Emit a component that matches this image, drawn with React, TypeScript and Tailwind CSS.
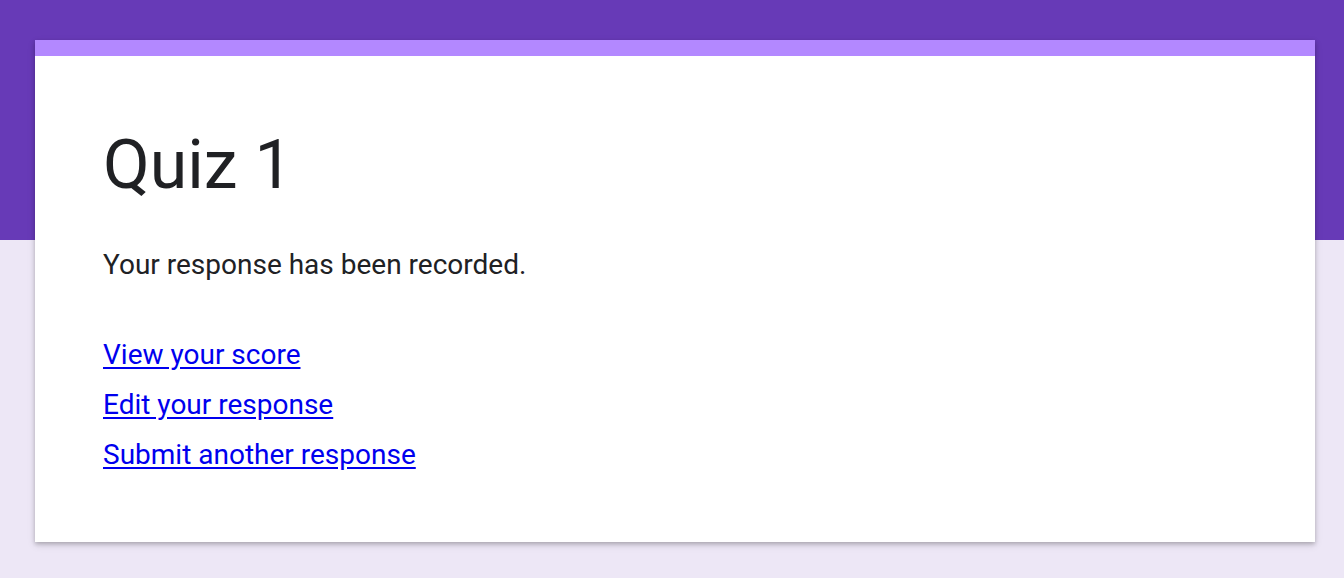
import React from "react";

const links = ["View your score", "Edit your response", "Submit another response"];

const App = () => {
  return (
    <div
      className="min-h-[578px] bg-[#ede7f6] text-[#202124]"
      style={{ fontFamily: "Roboto, 'Liberation Sans', sans-serif" }}
    >
      {/* purple top band */}
      <div className="h-[240px] bg-[#673ab7]"></div>
      <div className="-mt-[200px] ml-[35px] w-[1280px] bg-white shadow-[0_2px_4px_rgba(0,0,0,0.2),0_3px_8px_rgba(0,0,0,0.12)]">
        <div className="h-[16px] bg-[#b388ff]"></div>
        <div className="px-[68px] pt-[69px] pb-[62px]">
          <h1 className="text-[68px] leading-[80px] font-normal">Quiz 1</h1>
          <p className="mt-[42px] text-[28px] leading-[36px]">Your response has been recorded.</p>
          <div className="mt-[47px] flex flex-col items-start">
            {links.map((l) => (
              <a key={l} href="#" className="text-[28px] leading-[50px] text-[#0000ee] underline underline-offset-[3px]">
                {l}
              </a>
            ))}
          </div>
        </div>
      </div>
    </div>
  );
};

export default App;
